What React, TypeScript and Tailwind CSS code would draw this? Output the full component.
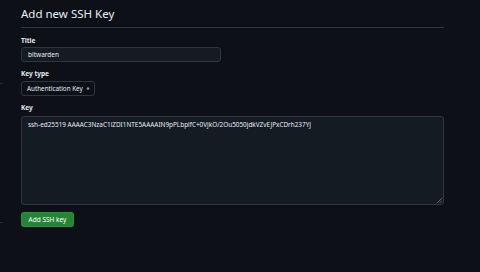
import React from "react";

export default function App() {
  return (
    <div className="w-[480px] h-[272px] bg-[#0d1117] flex overflow-hidden font-['Noto_Sans',sans-serif] text-[#e6edf3]">
      <div className="w-[3px] flex flex-col">
        <div className="h-[83px]" />
        <div className="h-px bg-[#262c36]" />
        <div className="h-[138px]" />
        <div className="h-px bg-[#262c36]" />
      </div>
      <div className="ml-[18px] w-[423px] flex flex-col">
        <div className="h-[28px] border-b border-[#30363d] pt-[7px]">
          <h2 className="text-[11.5px] leading-[14px] font-normal">Add new SSH Key</h2>
        </div>
        <label className="mt-[8px] text-[6.5px] leading-[10px] font-bold">Title</label>
        <div className="mt-[1px] w-[200px] h-[15px] rounded-[3px] border border-[#30363d] bg-[#151b23] px-[6px] flex items-center text-[6.5px]">
          bitwarden
        </div>
        <label className="mt-[7px] text-[6.5px] leading-[10px] font-bold">Key type</label>
        <div className="mt-[2px] w-[74px] h-[15px] rounded-[3px] border border-[#30363d] bg-[#0d1117] pl-[5px] pr-[3px] flex items-center gap-[2px] text-[6.3px] whitespace-nowrap">
          <span>Authentication Key</span>
          <svg width="6" height="7" viewBox="0 0 16 16" fill="#9198a1" className="shrink-0">
            <path d="m4.427 7.427 3.396-3.396a.25.25 0 0 1 .354 0l3.396 3.396A.25.25 0 0 1 11.396 8H4.604a.25.25 0 0 1-.177-.573ZM4.427 8.573l3.396 3.396a.25.25 0 0 0 .354 0l3.396-3.396A.25.25 0 0 0 11.396 8H4.604a.25.25 0 0 0-.177.573Z" />
          </svg>
        </div>
        <label className="mt-[7px] text-[6.5px] leading-[10px] font-bold">Key</label>
        <div className="relative mt-[3px] w-[423px] h-[89px] rounded-[3px] border border-[#30363d] bg-[#151b23] px-[6px] pt-[3px] text-[6.4px] leading-[10px] whitespace-nowrap">
          ssh-ed25519 AAAAC3NzaC1lZDI1NTE5AAAAIN9pPLbplfC+0VjkO/2Ou5050jdkVZvEJPxCDrh237YJ
          <svg className="absolute right-[1px] bottom-[1px]" width="5" height="5" viewBox="0 0 5 5">
            <path d="M5 0 L0 5 M5 2.5 L2.5 5" stroke="#6e7681" strokeWidth="0.8" />
          </svg>
        </div>
        <button className="mt-[7px] w-[53px] h-[15px] rounded-[3px] bg-[#238636] border border-[#2ea043]/40 text-white text-[6.5px] flex items-center justify-center">
          Add SSH key
        </button>
      </div>
    </div>
  );
}
